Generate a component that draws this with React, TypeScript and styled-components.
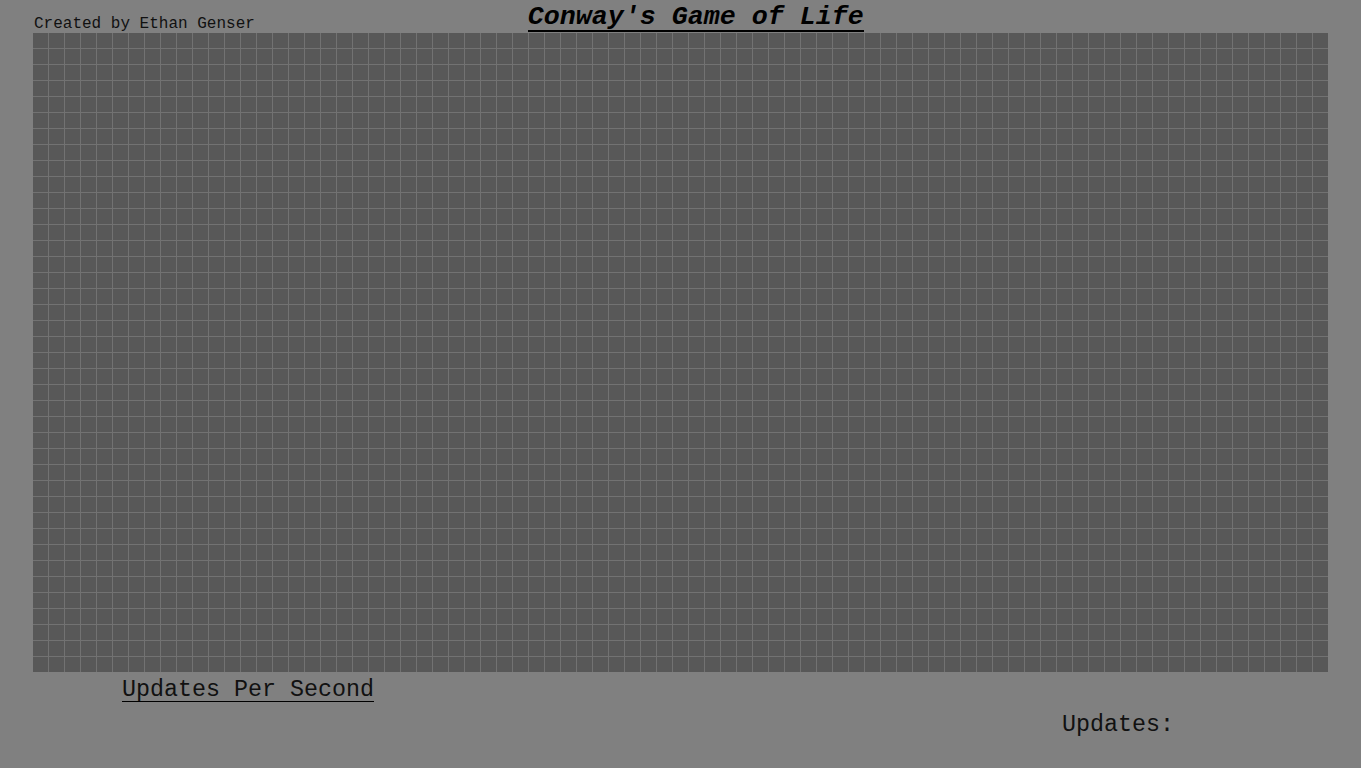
import React from "react";
import styled, { createGlobalStyle } from "styled-components";

const COLS = 81;
const ROWS = 40;

const GlobalStyle = createGlobalStyle`
  html, body {
    margin: 0;
    padding: 0;
    background: #808080;
  }
  body {
    font-family: "Liberation Mono", "Courier New", monospace;
    color: #111;
  }
`;

const Page = styled.div`
  width: 1361px;
  height: 768px;
  display: flex;
  flex-direction: column;
  overflow: hidden;
`;

const Header = styled.header`
  height: 33px;
  display: flex;
  align-items: flex-start;
  padding-left: 34px;
`;

const Credit = styled.span`
  font-size: 16px;
  line-height: 16px;
  margin-top: 16px;
`;

const Title = styled.h1`
  margin: 3px 0 0 273px;
  font-size: 26.67px;
  line-height: 29px;
  height: 27px;
  font-weight: bold;
  font-style: italic;
  color: #000;
  border-bottom: 2px solid #000;
`;

const Board = styled.div`
  margin-left: 33px;
  width: 1295px;
  display: grid;
  grid-template-columns: repeat(${COLS}, 15px);
  grid-template-rows: repeat(${ROWS}, 15px);
  gap: 1px;
  background: #727272;
`;

const Cell = styled.div<{ $alive?: boolean }>`
  background: ${(p) => (p.$alive ? "#e0e0e0" : "#585858")};
`;

const Controls = styled.section`
  display: flex;
  flex-direction: column;
  align-items: flex-start;
`;

const SpeedLabel = styled.span`
  margin: 5px 0 0 122px;
  font-size: 23.33px;
  line-height: 26px;
  height: 24px;
  border-bottom: 1px solid #000;
`;

const Counter = styled.span`
  margin: 11px 0 0 1062px;
  font-size: 23.33px;
  line-height: 24px;
`;

export default function App() {
  const cells = Array.from({ length: COLS * ROWS }, (_, i) => <Cell key={i} />);
  return (
    <>
      <GlobalStyle />
      <Page>
        <Header>
          <Credit>Created by Ethan Genser</Credit>
          <Title>Conway's Game of Life</Title>
        </Header>
        <Board>{cells}</Board>
        <Controls>
          <SpeedLabel>Updates Per Second</SpeedLabel>
          <Counter>Updates:</Counter>
        </Controls>
      </Page>
    </>
  );
}
